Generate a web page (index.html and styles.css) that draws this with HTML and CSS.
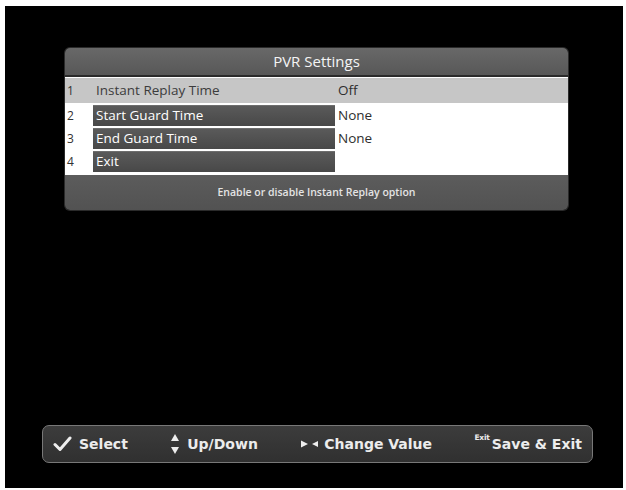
FILE: index.html
```html
<!DOCTYPE html>
<html>
<head>
<meta charset="utf-8">
<title>PVR Settings</title>
<link rel="stylesheet" href="styles.css">
</head>
<body>
<div class="screen">
  <div class="panel">
    <div class="panel-title">PVR Settings</div>
    <div class="rows">
      <div class="row row-active">
        <span class="num">1</span>
        <span class="label">Instant Replay Time</span>
        <span class="value">Off</span>
      </div>
      <div class="row">
        <span class="num">2</span>
        <span class="label">Start Guard Time</span>
        <span class="value">None</span>
      </div>
      <div class="row">
        <span class="num">3</span>
        <span class="label">End Guard Time</span>
        <span class="value">None</span>
      </div>
      <div class="row">
        <span class="num">4</span>
        <span class="label">Exit</span>
        <span class="value"></span>
      </div>
    </div>
    <div class="panel-footer">Enable or disable Instant Replay option</div>
  </div>

  <div class="help-bar">
    <div class="help-item">
      <svg class="ico-check" width="19" height="16" viewBox="0 0 19 16">
        <path d="M2 8.5 L7 13.5 L17 2" fill="none" stroke="#eeeeee" stroke-width="3" stroke-linecap="round" stroke-linejoin="round"/>
      </svg>
      <span>Select</span>
    </div>
    <div class="help-item">
      <svg class="ico-updown" width="10" height="22" viewBox="0 0 10 22">
        <path d="M5 1 L9 8 L1 8 Z" fill="#eeeeee"/>
        <path d="M5 21 L9 14 L1 14 Z" fill="#eeeeee"/>
      </svg>
      <span>Up/Down</span>
    </div>
    <div class="help-item">
      <svg class="ico-lr" width="20" height="10" viewBox="0 0 20 10">
        <path d="M1 1.5 L8 5 L1 8.5 Z" fill="#eeeeee"/>
        <path d="M18 2 L12 5 L18 8 Z" fill="#eeeeee"/>
      </svg>
      <span>Change Value</span>
    </div>
    <div class="help-item">
      <span class="exit-key">Exit</span>
      <span>Save &amp; Exit</span>
    </div>
  </div>
</div>
</body>
</html>
```

FILE: styles.css
```css
* {
  box-sizing: border-box;
}

html, body {
  margin: 0;
  padding: 0;
  background: #ffffff;
}

.screen {
  margin: 6px 0 0 5px;
  width: 618px;
  height: 482px;
  background: #000000;
  display: flex;
  flex-direction: column;
  font-family: "Open Sans", "DejaVu Sans", sans-serif;
}

.panel {
  margin: 42px 0 0 60px;
  width: 503px;
  border-radius: 5px;
  overflow: hidden;
  box-shadow: 0 0 0 1px #2a2a2a;
}

.panel-title {
  height: 29px;
  border-bottom: 2px solid #2b2b2b;
  background: linear-gradient(#686868, #585858);
  color: #f4f4f4;
  font-size: 15px;
  display: flex;
  align-items: center;
  justify-content: center;
  padding-bottom: 1px;
}

.rows {
  background: #ffffff;
  padding: 1px 0 3px;
  display: flex;
  flex-direction: column;
  gap: 2px;
}

.row {
  display: grid;
  grid-template-columns: 28px 242px 1fr;
  height: 21px;
  font-size: 13.5px;
  line-height: 21px;
}

.row-active {
  height: 25px;
  line-height: 25px;
  background: #c6c6c6;
}

.num {
  padding-left: 2px;
  color: #333333;
  font-size: 12px;
}

.label {
  padding-left: 3px;
  background: linear-gradient(#5a5a5a, #484848);
  color: #ffffff;
  border-top: 1px solid #6e6e6e;
  line-height: 19px;
  white-space: nowrap;
}

.row-active .label {
  background: none;
  border-top: none;
  color: #3c3c3c;
  line-height: 25px;
}

.value {
  padding-left: 3px;
  color: #2e2e2e;
}

.panel-footer {
  height: 35px;
  background: linear-gradient(#5c5c5c, #525252);
  color: #e4e4e4;
  font-size: 10.5px;
  font-weight: 600;
  display: flex;
  align-items: center;
  justify-content: center;
  padding-bottom: 1px;
}

.help-bar {
  margin: auto 0 25px 37px;
  width: 551px;
  height: 38px;
  border: 1px solid #787878;
  border-radius: 7px;
  background: linear-gradient(#3c3c3c, #303030);
  display: flex;
  align-items: center;
  justify-content: space-between;
  padding: 0 10px 0 10px;
  color: #ececec;
  font-family: "DejaVu Sans", "Open Sans", sans-serif;
  font-weight: bold;
  font-size: 14px;
}

.help-item {
  display: flex;
  align-items: center;
  white-space: nowrap;
}

.ico-check {
  margin-right: 7px;
}

.ico-updown {
  margin-right: 7px;
}

.ico-lr {
  margin-right: 4px;
}

.exit-key {
  font-size: 7.5px;
  align-self: flex-start;
  margin-top: -3px;
  margin-right: 2px;
  letter-spacing: -0.2px;
}
```
